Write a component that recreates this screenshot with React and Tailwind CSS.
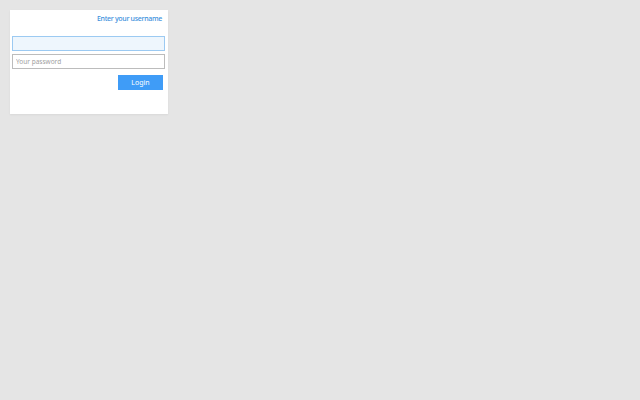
export default function App() {
  return (
    <div className="min-h-screen w-full bg-[#e5e5e5] p-[10px]" style={{ fontFamily: '"Noto Sans", "Open Sans", sans-serif' }}>
      <div className="flex h-[104px] w-[158px] flex-col bg-white px-[2px] pt-[4px] shadow-[0_1px_2px_rgba(0,0,0,0.06)]">
        <div className="h-[22px] pr-[4px] text-right text-[7px] font-medium leading-[9px] tracking-[-0.3px] text-[#3b8fdc]">
          Enter your username
        </div>
        <input
          className="h-[15px] w-[153px] border border-[#9ccaf2] bg-[#eef6fd] px-[3px] text-[6.5px] outline-none"
          defaultValue=""
        />
        <input
          className="mt-[3px] h-[15px] w-[153px] border border-[#bcbcbc] bg-white px-[3px] text-[6.5px] text-[#555] placeholder:text-[#a0a0a0] outline-none"
          placeholder="Your password"
          type="password"
        />
        <div className="mt-[6px] flex w-[153px] justify-end pr-[2px]">
          <button className="h-[15px] w-[45px] bg-[#3f9cf7] text-[7px] leading-none text-white">
            Login
          </button>
        </div>
      </div>
    </div>
  );
}
